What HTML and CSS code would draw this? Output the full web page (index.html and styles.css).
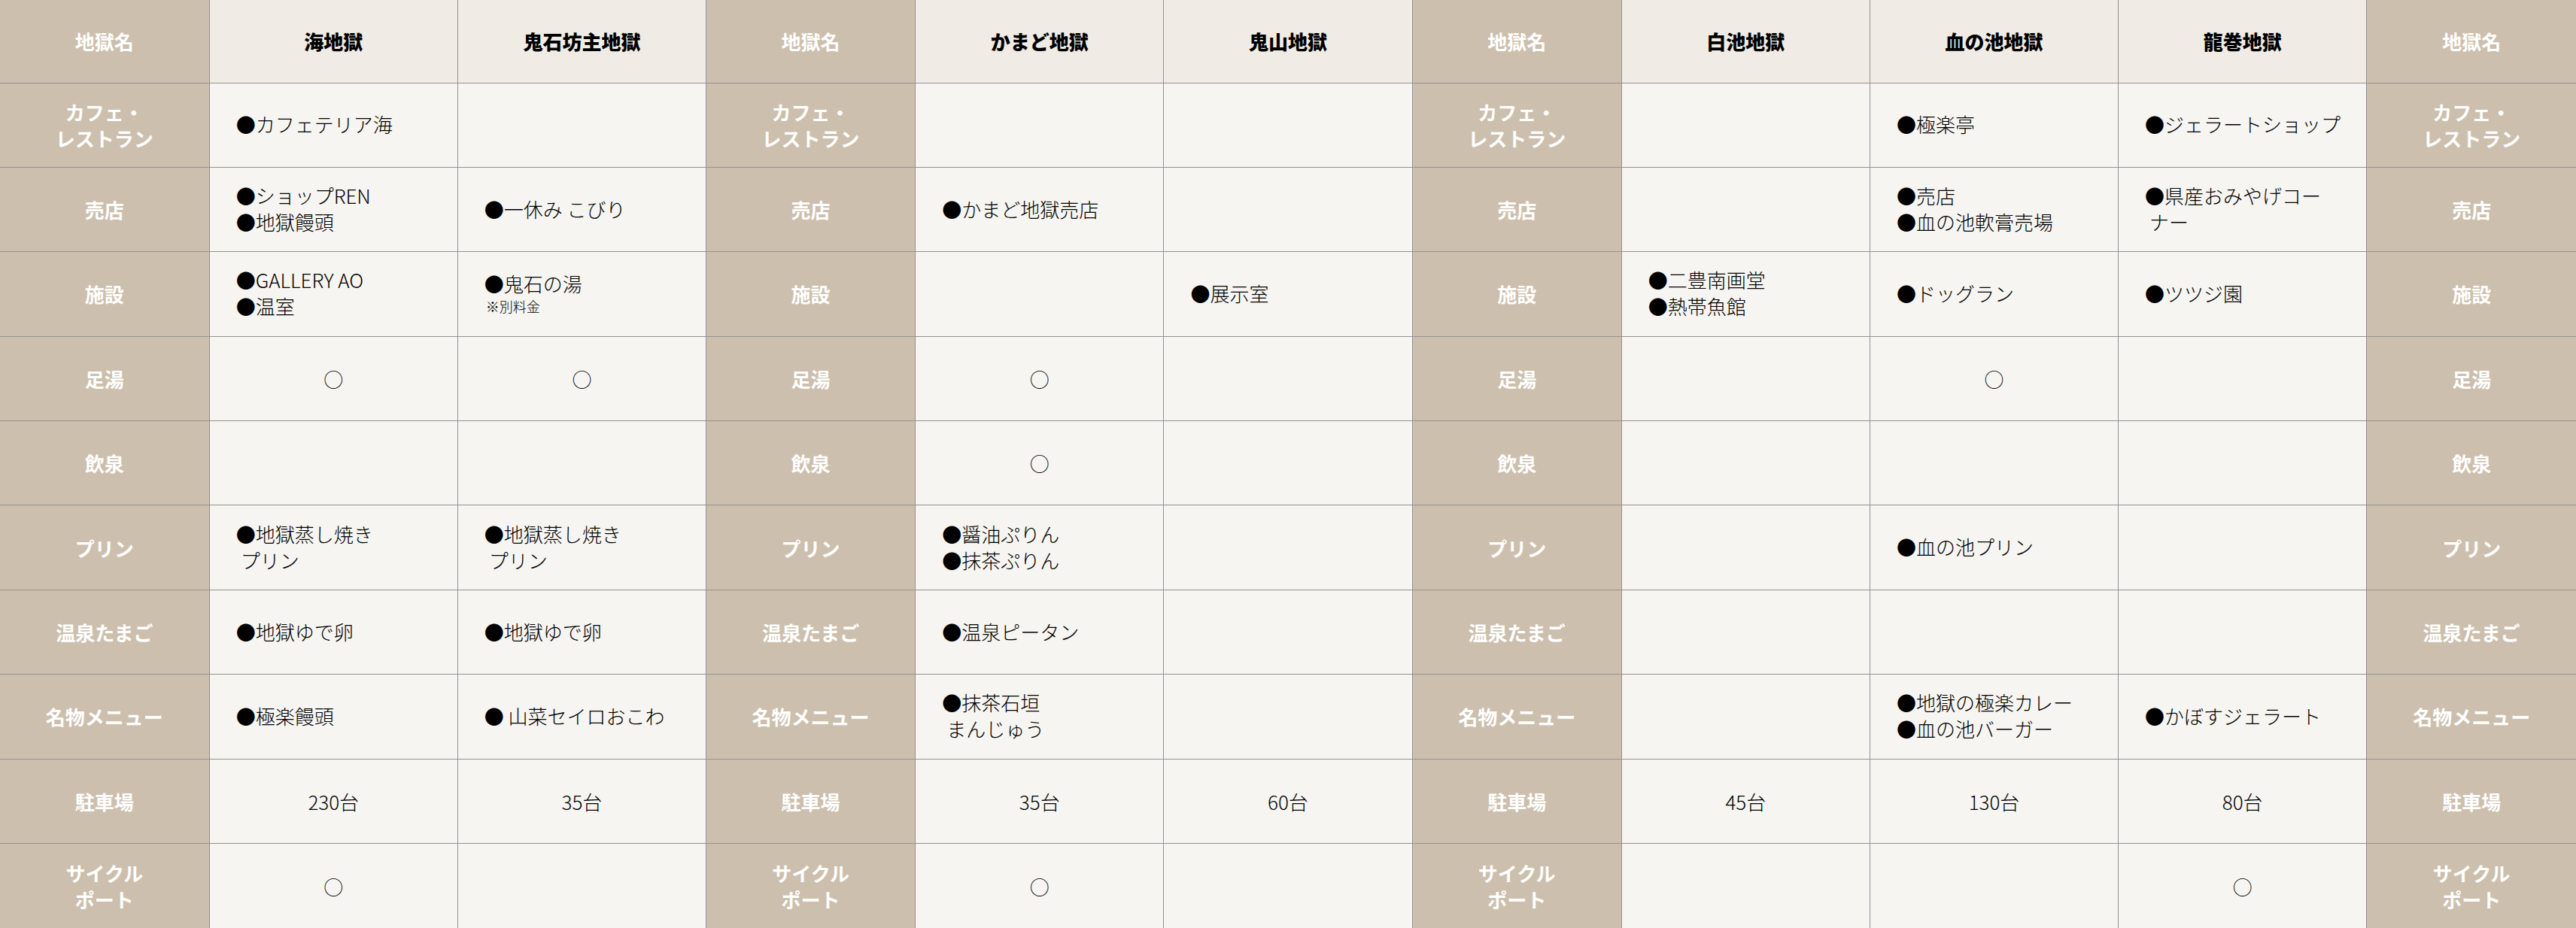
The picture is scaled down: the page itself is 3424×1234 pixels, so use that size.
FILE: index.html
```html
<!DOCTYPE html>
<html lang="ja">
<head>
<meta charset="utf-8">
<title>地獄めぐり 施設一覧</title>
<link rel="stylesheet" href="styles.css">
</head>
<body>
<table class="spec">
  <colgroup>
    <col class="col-l"><col class="col-d"><col class="col-d">
    <col class="col-l"><col class="col-d"><col class="col-d">
    <col class="col-l"><col class="col-d"><col class="col-d"><col class="col-d">
    <col class="col-l">
  </colgroup>
  <thead>
    <tr class="head-row">
      <th class="lbl">地獄名</th><th class="name">海地獄</th><th class="name">鬼石坊主地獄</th>
      <th class="lbl">地獄名</th><th class="name">かまど地獄</th><th class="name">鬼山地獄</th>
      <th class="lbl">地獄名</th><th class="name">白池地獄</th><th class="name">血の池地獄</th><th class="name">龍巻地獄</th>
      <th class="lbl">地獄名</th>
    </tr>
  </thead>
  <tbody>
    <tr class="row">
      <th class="lbl">カフェ・<br>レストラン</th><td>●カフェテリア海</td><td></td>
      <th class="lbl">カフェ・<br>レストラン</th><td></td><td></td>
      <th class="lbl">カフェ・<br>レストラン</th><td></td><td>●極楽亭</td><td>●ジェラートショップ</td>
      <th class="lbl">カフェ・<br>レストラン</th>
    </tr>
    <tr class="row">
      <th class="lbl">売店</th><td>●ショップREN<br>●地獄饅頭</td><td>●一休み こびり</td>
      <th class="lbl">売店</th><td>●かまど地獄売店</td><td></td>
      <th class="lbl">売店</th><td></td><td>●売店<br>●血の池軟膏売場</td><td>●県産おみやげコー<br><span class="cont">ナー</span></td>
      <th class="lbl">売店</th>
    </tr>
    <tr class="row">
      <th class="lbl">施設</th><td>●GALLERY AO<br>●温室</td><td>●鬼石の湯<span class="note">※別料金</span></td>
      <th class="lbl">施設</th><td></td><td>●展示室</td>
      <th class="lbl">施設</th><td>●二豊南画堂<br>●熱帯魚館</td><td>●ドッグラン</td><td>●ツツジ園</td>
      <th class="lbl">施設</th>
    </tr>
    <tr class="row">
      <th class="lbl">足湯</th><td class="c">○</td><td class="c">○</td>
      <th class="lbl">足湯</th><td class="c">○</td><td></td>
      <th class="lbl">足湯</th><td></td><td class="c">○</td><td></td>
      <th class="lbl">足湯</th>
    </tr>
    <tr class="row">
      <th class="lbl">飲泉</th><td></td><td></td>
      <th class="lbl">飲泉</th><td class="c">○</td><td></td>
      <th class="lbl">飲泉</th><td></td><td></td><td></td>
      <th class="lbl">飲泉</th>
    </tr>
    <tr class="row">
      <th class="lbl">プリン</th><td>●地獄蒸し焼き<br><span class="cont">プリン</span></td><td>●地獄蒸し焼き<br><span class="cont">プリン</span></td>
      <th class="lbl">プリン</th><td>●醤油ぷりん<br>●抹茶ぷりん</td><td></td>
      <th class="lbl">プリン</th><td></td><td>●血の池プリン</td><td></td>
      <th class="lbl">プリン</th>
    </tr>
    <tr class="row">
      <th class="lbl">温泉たまご</th><td>●地獄ゆで卵</td><td>●地獄ゆで卵</td>
      <th class="lbl">温泉たまご</th><td>●温泉ピータン</td><td></td>
      <th class="lbl">温泉たまご</th><td></td><td></td><td></td>
      <th class="lbl">温泉たまご</th>
    </tr>
    <tr class="row">
      <th class="lbl">名物メニュー</th><td>●極楽饅頭</td><td>● 山菜セイロおこわ</td>
      <th class="lbl">名物メニュー</th><td>●抹茶石垣<br><span class="cont">まんじゅう</span></td><td></td>
      <th class="lbl">名物メニュー</th><td></td><td>●地獄の極楽カレー<br>●血の池バーガー</td><td>●かぼすジェラート</td>
      <th class="lbl">名物メニュー</th>
    </tr>
    <tr class="row">
      <th class="lbl">駐車場</th><td class="c">230台</td><td class="c">35台</td>
      <th class="lbl">駐車場</th><td class="c">35台</td><td class="c">60台</td>
      <th class="lbl">駐車場</th><td class="c">45台</td><td class="c">130台</td><td class="c">80台</td>
      <th class="lbl">駐車場</th>
    </tr>
    <tr class="row">
      <th class="lbl">サイクル<br>ポート</th><td class="c">○</td><td></td>
      <th class="lbl">サイクル<br>ポート</th><td class="c">○</td><td></td>
      <th class="lbl">サイクル<br>ポート</th><td></td><td></td><td class="c">○</td>
      <th class="lbl">サイクル<br>ポート</th>
    </tr>
  </tbody>
</table>
</body>
</html>
```

FILE: styles.css
```css
html, body {
  margin: 0;
  padding: 0;
  background: #f6f5f1;
}

body {
  font-family: "Noto Sans CJK JP", "Noto Sans", sans-serif;
  color: #111;
}

.spec {
  width: 3424px;
  height: 1234px;
  border-collapse: collapse;
  border-style: hidden;
  table-layout: fixed;
}

.col-l { width: 278px; }
.col-d { width: 330px; }

.spec th,
.spec td {
  border: 1px solid #929292;
  padding: 0;
  font-size: 26px;
  line-height: 35px;
  vertical-align: middle;
}

.head-row { height: 110px; }
.row { height: 112px; }

.spec .lbl {
  background: #cdbfad;
  color: #ffffff;
  font-weight: 700;
  text-align: center;
}

.spec .name {
  background: #f0ece5;
  color: #000;
  font-weight: 900;
  text-align: center;
}

.spec td {
  background: #f6f5f1;
  color: #000;
  font-weight: 300;
  text-align: left;
  padding-left: 35px;
  padding-right: 10px;
  padding-bottom: 3px;
}

.spec td.c {
  text-align: center;
  padding-left: 0;
  padding-right: 0;
  padding-bottom: 0;
}

.cont {
  padding-left: 6px;
}

.note {
  display: block;
  font-size: 18px;
  line-height: 26px;
  padding-left: 2px;
}
```
